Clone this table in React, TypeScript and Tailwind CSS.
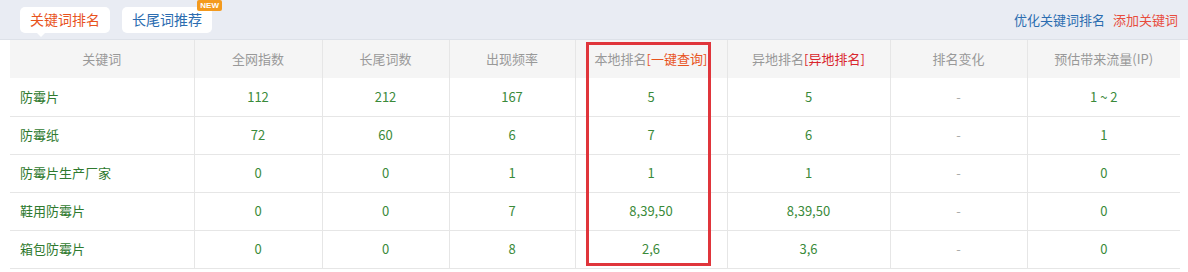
import React from 'react';

type Row = {
  keyword: string;
  total: string;
  longtail: string;
  freq: string;
  local: string;
  remote: string;
  change: string;
  traffic: string;
};

const rows: Row[] = [
  { keyword: '防霉片', total: '112', longtail: '212', freq: '167', local: '5', remote: '5', change: '-', traffic: '1 ~ 2' },
  { keyword: '防霉纸', total: '72', longtail: '60', freq: '6', local: '7', remote: '6', change: '-', traffic: '1' },
  { keyword: '防霉片生产厂家', total: '0', longtail: '0', freq: '1', local: '1', remote: '1', change: '-', traffic: '0' },
  { keyword: '鞋用防霉片', total: '0', longtail: '0', freq: '7', local: '8,39,50', remote: '8,39,50', change: '-', traffic: '0' },
  { keyword: '箱包防霉片', total: '0', longtail: '0', freq: '8', local: '2,6', remote: '3,6', change: '-', traffic: '0' },
];

const font = { fontFamily: '"Noto Sans CJK SC", "Noto Sans", sans-serif' };

export default function App() {
  return (
    <div className="w-[1188px] h-[272px] bg-white overflow-hidden text-[13px]" style={font}>
      {/* Tabs bar */}
      <div className="relative flex h-[40px] items-center justify-between border-b border-[#dde1e8] bg-[#e9ecf3] pl-[20px] pr-[10px]">
        <div className="flex items-center gap-[12px]">
          <div className="relative flex h-[26px] w-[90px] items-center justify-center rounded-[5px] bg-white text-[14px] text-[#e8541e]">
            关键词排名
            <span className="absolute left-[16px] top-[25px] h-0 w-0 border-x-[5px] border-t-[5px] border-x-transparent border-t-white" />
          </div>
          <div className="relative flex h-[26px] w-[90px] items-center justify-center rounded-[5px] bg-white text-[14px] text-[#2b6cb0]">
            长尾词推荐
            <span
              className="absolute -right-[10px] -top-[7px] rounded-[2px] bg-[#f39a1e] px-[3px] text-[8px] font-bold leading-[11px] text-white"
              style={{ fontFamily: '"Liberation Sans", Arial, sans-serif' }}
            >
              NEW
            </span>
          </div>
        </div>
        <div className="flex items-center gap-[8px] text-[13px]">
          <span className="text-[#2b6cb0]">优化关键词排名</span>
          <span className="text-[#e84c3d]">添加关键词</span>
        </div>
      </div>

      {/* Table */}
      <div className="relative ml-[10px] w-[1170px]">
        <table className="w-full table-fixed border-collapse">
          <colgroup>
            <col className="w-[184px]" />
            <col className="w-[128px]" />
            <col className="w-[127px]" />
            <col className="w-[126px]" />
            <col className="w-[152px]" />
            <col className="w-[163px]" />
            <col className="w-[137px]" />
            <col />
          </colgroup>
          <thead>
            <tr className="h-[38px] bg-[#f5f5f5] text-[#999]">
              <th className="border-r border-[#e6e6e6] font-normal">关键词</th>
              <th className="border-r border-[#e6e6e6] font-normal">全网指数</th>
              <th className="border-r border-[#e6e6e6] font-normal">长尾词数</th>
              <th className="border-r border-[#e6e6e6] font-normal">出现频率</th>
              <th className="border-r border-[#e6e6e6] font-normal">
                本地排名<span className="text-[#e8541e]">[一键查询]</span>
              </th>
              <th className="border-r border-[#e6e6e6] font-normal">
                异地排名<span className="text-[#d9262c]">[异地排名]</span>
              </th>
              <th className="border-r border-[#e6e6e6] font-normal">排名变化</th>
              <th className="font-normal">预估带来流量(IP)</th>
            </tr>
          </thead>
          <tbody>
            {rows.map((r) => (
              <tr key={r.keyword} className="h-[38px] border-b border-[#e6e6e6] text-center text-[#3a8a3a]">
                <td className="border-r border-[#e6e6e6] pl-[10px] text-left text-[#2f7a2f]">{r.keyword}</td>
                <td className="border-r border-[#e6e6e6]">{r.total}</td>
                <td className="border-r border-[#e6e6e6]">{r.longtail}</td>
                <td className="border-r border-[#e6e6e6]">{r.freq}</td>
                <td className="border-r border-[#e6e6e6]">{r.local}</td>
                <td className="border-r border-[#e6e6e6]">{r.remote}</td>
                <td className="border-r border-[#e6e6e6] text-[#aaa]">{r.change}</td>
                <td>{r.traffic}</td>
              </tr>
            ))}
          </tbody>
        </table>
        {/* highlight box over local rank column */}
        <div className="pointer-events-none absolute left-[576px] top-[2px] h-[224px] w-[125px] border-[3px] border-[#e0353b]" />
      </div>
    </div>
  );
}
